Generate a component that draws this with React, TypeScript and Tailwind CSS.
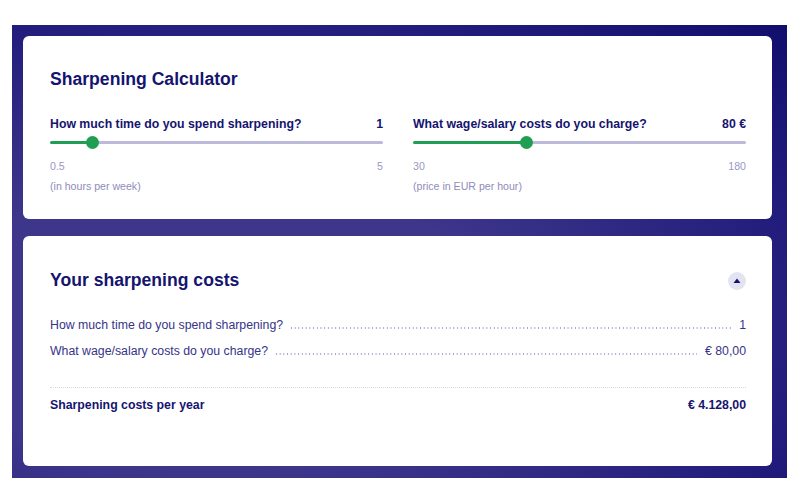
const font = { fontFamily: '"Liberation Sans", Arial, sans-serif' }

function RangeField({
  label,
  value,
  min,
  max,
  hint,
  percent,
}: {
  label: string
  value: string
  min: string
  max: string
  hint: string
  percent: number
}) {
  return (
    <div className="flex-1">
      <div className="flex items-center justify-between text-[12.3px] leading-[14px] font-bold text-[#15146f]">
        <span>{label}</span>
        <span>{value}</span>
      </div>
      <div className="mt-[5px] flex h-[13px] items-center">
        <div className="h-[3px] rounded-l-full bg-[#1f9e54]" style={{ width: `${percent}%` }} />
        <div className="z-10 -mx-[6px] h-[13px] w-[13px] shrink-0 rounded-full bg-[#1f9e54]" />
        <div className="h-[3px] flex-1 rounded-r-full bg-[#bcb9da]" />
      </div>
      <div className="mt-[11px] flex justify-between text-[10.6px] leading-[12px] text-[#9a97c2]">
        <span>{min}</span>
        <span>{max}</span>
      </div>
      <p className="mt-[8px] text-[10.6px] leading-[12px] text-[#8f8cbc]">{hint}</p>
    </div>
  )
}

function CostRow({ label, value }: { label: string; value: string }) {
  return (
    <div className="flex items-center gap-[8px] text-[12.3px] leading-[14px] text-[#363488]">
      <span>{label}</span>
      <span className="mt-[6px] h-[1.5px] flex-1 bg-[linear-gradient(90deg,#a3a0cf_1.3px,transparent_1.3px)] bg-[length:3.7px_2px]" />
      <span>{value}</span>
    </div>
  )
}

export default function App() {
  return (
    <div className="h-[500px] w-[806px] bg-white pt-[25px] pl-[12px]" style={font}>
      <div className="flex h-[453px] w-[775px] flex-col gap-[17px] bg-[radial-gradient(ellipse_800px_420px_at_200px_300px,#3e368b_35%,#221d7c_75%,#110e6e_100%)] p-[11px] pr-[15px] pb-[12px]">
        <section className="h-[183px] rounded-[6px] bg-white pt-[33px] pr-[26px] pl-[27px]">
          <h1 className="text-[17.6px] leading-[20px] font-bold text-[#15146f]">Sharpening Calculator</h1>
          <div className="mt-[28px] flex gap-[30px]">
            <RangeField
              label="How much time do you spend sharpening?"
              value="1"
              min="0.5"
              max="5"
              hint="(in hours per week)"
              percent={12.5}
            />
            <RangeField
              label="What wage/salary costs do you charge?"
              value="80 €"
              min="30"
              max="180"
              hint="(price in EUR per hour)"
              percent={33.8}
            />
          </div>
        </section>

        <section className="flex-1 rounded-[6px] bg-white pt-[34px] pr-[26px] pl-[27px]">
          <div className="flex items-center justify-between">
            <h2 className="text-[17.6px] leading-[21px] font-bold text-[#15146f]">Your sharpening costs</h2>
            <button className="flex h-[18px] w-[18px] items-center justify-center rounded-full bg-[#e4e3f2]">
              <svg width="8" height="6" viewBox="0 0 8 6">
                <path d="M4 0.5 L7.5 5 H0.5 Z" fill="#15146f" />
              </svg>
            </button>
          </div>
          <div className="mt-[27px] flex flex-col gap-[12px]">
            <CostRow label="How much time do you spend sharpening?" value="1" />
            <CostRow label="What wage/salary costs do you charge?" value="€ 80,00" />
          </div>
          <div className="mt-[29px] border-t border-dotted border-[#d5d4e4] pt-[10px]">
            <div className="flex justify-between text-[12.3px] leading-[14px] font-bold text-[#15146f]">
              <span>Sharpening costs per year</span>
              <span>€ 4.128,00</span>
            </div>
          </div>
        </section>
      </div>
    </div>
  )
}
